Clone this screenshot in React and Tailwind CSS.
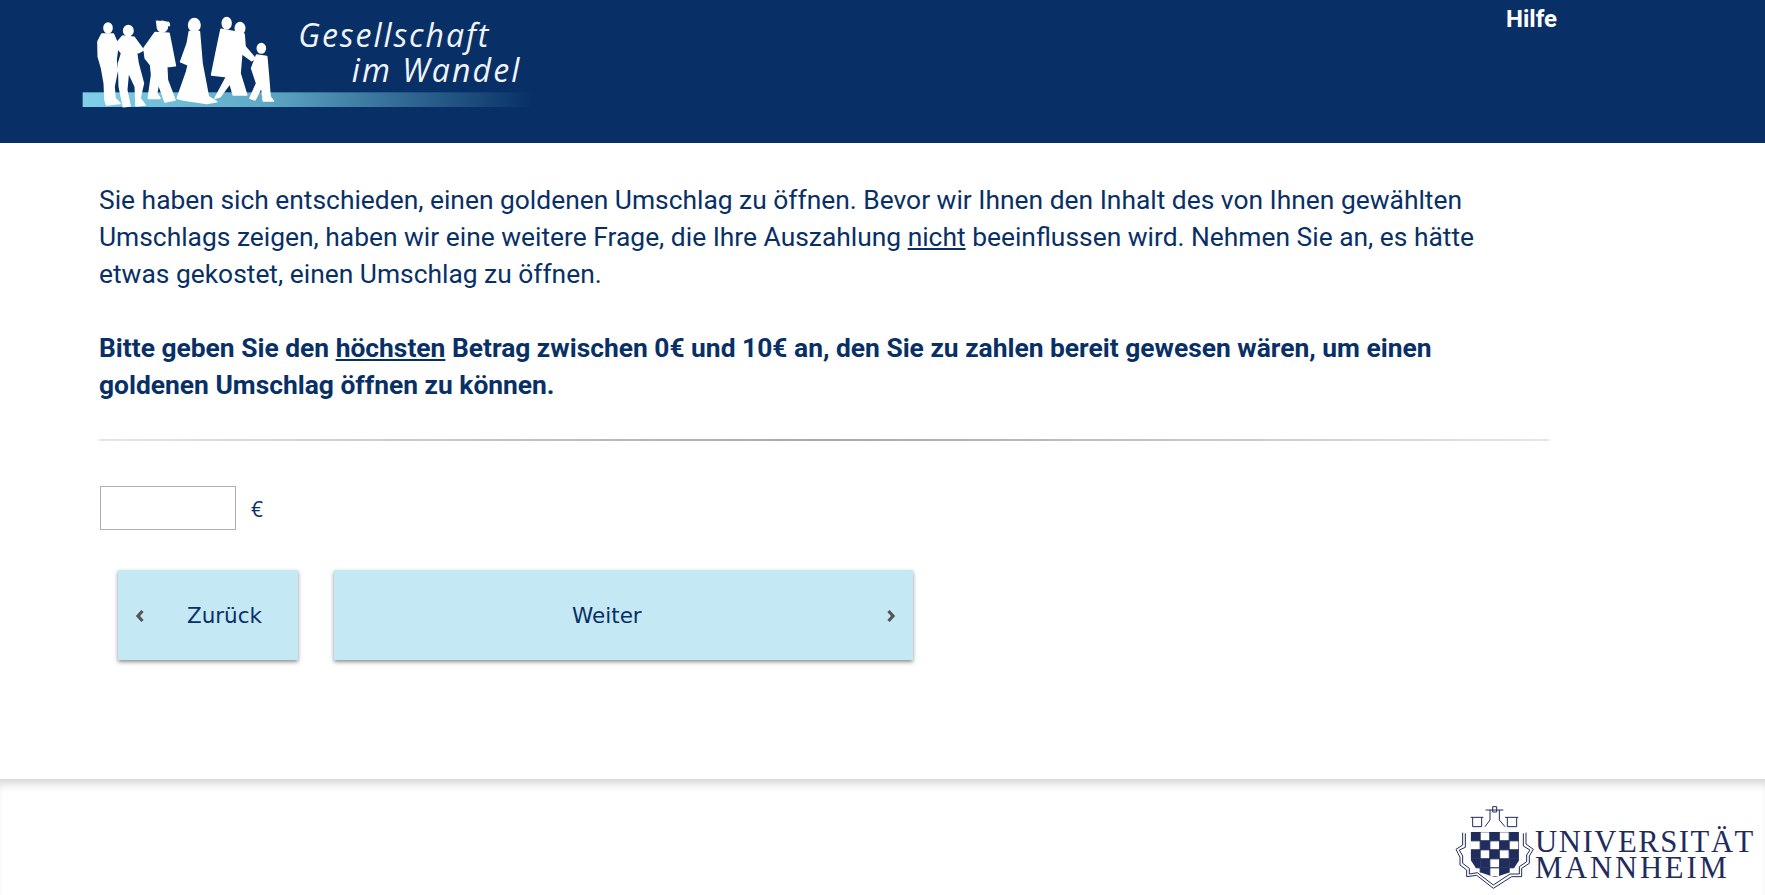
const Logo = () => (
  <svg viewBox="0 0 1500 429" className="w-[500px] h-[143px] ml-[60px] shrink-0">
    <defs>
      <linearGradient id="bar" x1="0" x2="1" y1="0" y2="0">
        <stop offset="0" stopColor="#7fd0e8" />
        <stop offset="0.4" stopColor="#5fa9c6" />
        <stop offset="1" stopColor="#083066" />
      </linearGradient>
    </defs>
    <rect x="68" y="277" width="1350" height="44" fill="url(#bar)" />
    <g fill="#fff" stroke="#fff" strokeWidth="5" strokeLinejoin="round">
      <ellipse cx="144" cy="84" rx="12" ry="15" />
      <path d="M126 102 L160 102 L174 135 L168 180 L172 210 L162 260 L165 295 L180 310 L140 315 L135 300 L133 250 L125 205 L115 170 L114 125 Z" />
      <ellipse cx="205" cy="92" rx="14" ry="15" />
      <path d="M188 108 L222 112 L250 150 L235 158 L228 148 L234 190 L250 250 L240 295 L255 315 L228 318 L226 260 L205 215 L200 270 L210 318 L190 320 L178 260 L176 190 L185 160 L165 135 Z" />
      <ellipse cx="307" cy="80" rx="15" ry="16" />
      <path d="M290 64 L326 68 L328 76 L292 76 Z" />
      <path d="M285 98 L327 100 L346 197 L320 200 L322 240 L345 300 L315 306 L295 250 L290 280 L300 295 L265 295 L275 225 L272 195 L256 175 L252 145 Z" />
      <ellipse cx="403" cy="75" rx="17" ry="19" />
      <path d="M388 95 L418 95 L426 190 L445 290 L470 305 L440 310 L370 300 L352 295 L380 215 L385 195 L362 185 L382 130 Z" />
      <ellipse cx="500" cy="70" rx="13" ry="17" />
      <ellipse cx="540" cy="85" rx="14" ry="17" />
      <path d="M483 88 L520 95 L552 102 L555 140 L585 175 L575 182 L545 160 L540 220 L560 285 L520 285 L510 250 L480 290 L465 295 L500 230 L455 225 L468 160 Z" />
      <ellipse cx="604" cy="145" rx="12" ry="14" />
      <path d="M590 165 L620 170 L625 225 L630 290 L640 303 L610 303 L605 260 L585 300 L570 295 L590 250 L575 205 Z" />
    </g>
    <g fill="#f1f4f8" fontFamily="'Open Sans', sans-serif" fontStyle="italic" fontSize="96">
      <text x="715" y="142" textLength="570">Gesellschaft</text>
      <text x="875" y="246" textLength="503">im Wandel</text>
    </g>
  </svg>
)

const UniLogo = () => {
  const cells = []
  const dark = [
    [1, 0, 1, 0, 1],
    [0, 1, 0, 1, 0],
    [1, 0, 1, 0, 1],
    [1, 1, 0, 1, 1],
    [0, 1, 0, 1, 0],
  ]
  dark.forEach((row, r) =>
    row.forEach((d, c) => {
      cells.push(
        <rect key={`${r}-${c}`} x={92 + c * 29} y={186 + r * 27} width="28" height="26" fill={d ? '#1f2c5c' : '#fff'} stroke="#1f2c5c" strokeWidth="2" />
      )
    })
  )
  return (
    <svg viewBox="0 0 975 375" className="w-[325px] h-[125px]">
      <defs>
        <clipPath id="shield">
          <path d="M92 185 H238 V270 L215 305 L165 322 L115 305 L92 270 Z" />
        </clipPath>
      </defs>
      <g clipPath="url(#shield)">{cells}</g>
      <g fill="none" stroke="#1f2c5c" strokeWidth="3">
        <path d="M68 188 V225 L48 238 L60 262 L60 285 L80 300 L80 320 L110 316 L160 355 L215 320 L245 320 L245 295 L268 280 L268 258 L280 238 L258 222 V188" />
        <path d="M76 190 V232 L58 240 L68 258 L68 280 L88 295 L88 312 L112 308 L160 345 L210 312 L238 312 L238 290 L260 275 L260 255 L270 240 L250 228 V190" />
        <path d="M92 142 H130 M98 142 V170 H125 V142 M137 120 H190 M150 120 V150 L135 170 M178 120 V150 L195 170 M158 110 H170 V126 H158 Z M195 142 H235 M202 142 V170 H230 V142" />
      </g>
      <g fill="#1f2c5c" fontFamily="'Liberation Serif', serif" fontSize="92">
        <text x="285" y="246" textLength="655">UNIVERSITÄT</text>
        <text x="285" y="325" textLength="575">MANNHEIM</text>
      </g>
    </svg>
  )
}

const Chevron = ({ dir }) => (
  <svg viewBox="0 0 10 14" className="w-[10px] h-[14px] shrink-0 mt-[2px]">
    <path d={dir === 'left' ? 'M7.5 2 L3 7 L7.5 12' : 'M2.5 2 L7 7 L2.5 12'} fill="none" stroke="#555" strokeWidth="3.2" />
  </svg>
)

export default function App() {
  return (
    <div className="min-h-[895px] flex flex-col bg-white overflow-hidden font-['Roboto',sans-serif] text-[#083066]">
      <header className="h-[143px] bg-[#083066] flex">
        <Logo />
        <a className="ml-[946px] mt-[3px] text-[24px] leading-[32px] font-bold text-white">Hilfe</a>
      </header>

      <main className="h-[636px] pl-[99px] pt-[39px]">
        <div className="w-[1440px] text-[26.38px] leading-[37px]">
          <p>
            Sie haben sich entschieden, einen goldenen Umschlag zu öffnen. Bevor wir Ihnen den Inhalt des von Ihnen gewählten Umschlags zeigen, haben wir eine weitere Frage, die Ihre Auszahlung <u>nicht</u> beeinflussen wird. Nehmen Sie an, es hätte etwas gekostet, einen Umschlag zu öffnen.
          </p>
          <p className="mt-[37px] font-bold">
            Bitte geben Sie den <u>höchsten</u> Betrag zwischen 0€ und 10€ an, den Sie zu zahlen bereit gewesen wären, um einen goldenen Umschlag öffnen zu können.
          </p>
        </div>
        <div className="w-[1450px] h-[2px] mt-[35px] bg-gradient-to-r from-[#e6e6e6] via-[#a8a8a8] to-[#e6e6e6]" />
        <div className="flex items-center mt-[45px] pl-[1px]">
          <input type="text" className="w-[136px] h-[44px] border border-[#b0b0b0] bg-white outline-none" />
          <span className="ml-[15px] text-[21px] mt-[3px] font-['Open_Sans',sans-serif]">€</span>
        </div>
        <div className="flex ml-[19px] mt-[40px] gap-[36px] font-['DejaVu_Sans',sans-serif] text-[21.5px]">
          <button className="w-[180px] h-[90px] bg-[#c5e8f5] shadow-[0_2px_4px_rgba(0,0,0,0.45)] flex items-center pl-[17px] pr-[36px] justify-between">
            <Chevron dir="left" />
            <span className="mt-[3px]">Zurück</span>
          </button>
          <button className="w-[579px] h-[90px] bg-[#c5e8f5] shadow-[0_2px_4px_rgba(0,0,0,0.45)] flex items-center pr-[17px] justify-between pl-[238px]">
            <span className="mt-[3px]">Weiter</span>
            <Chevron dir="right" />
          </button>
        </div>
      </main>

      <footer className="h-[116px] flex justify-end shadow-[inset_0_9px_8px_-4px_rgba(0,0,0,0.16)]">
        <div className="mt-[-9px]">
          <UniLogo />
        </div>
      </footer>
    </div>
  )
}
